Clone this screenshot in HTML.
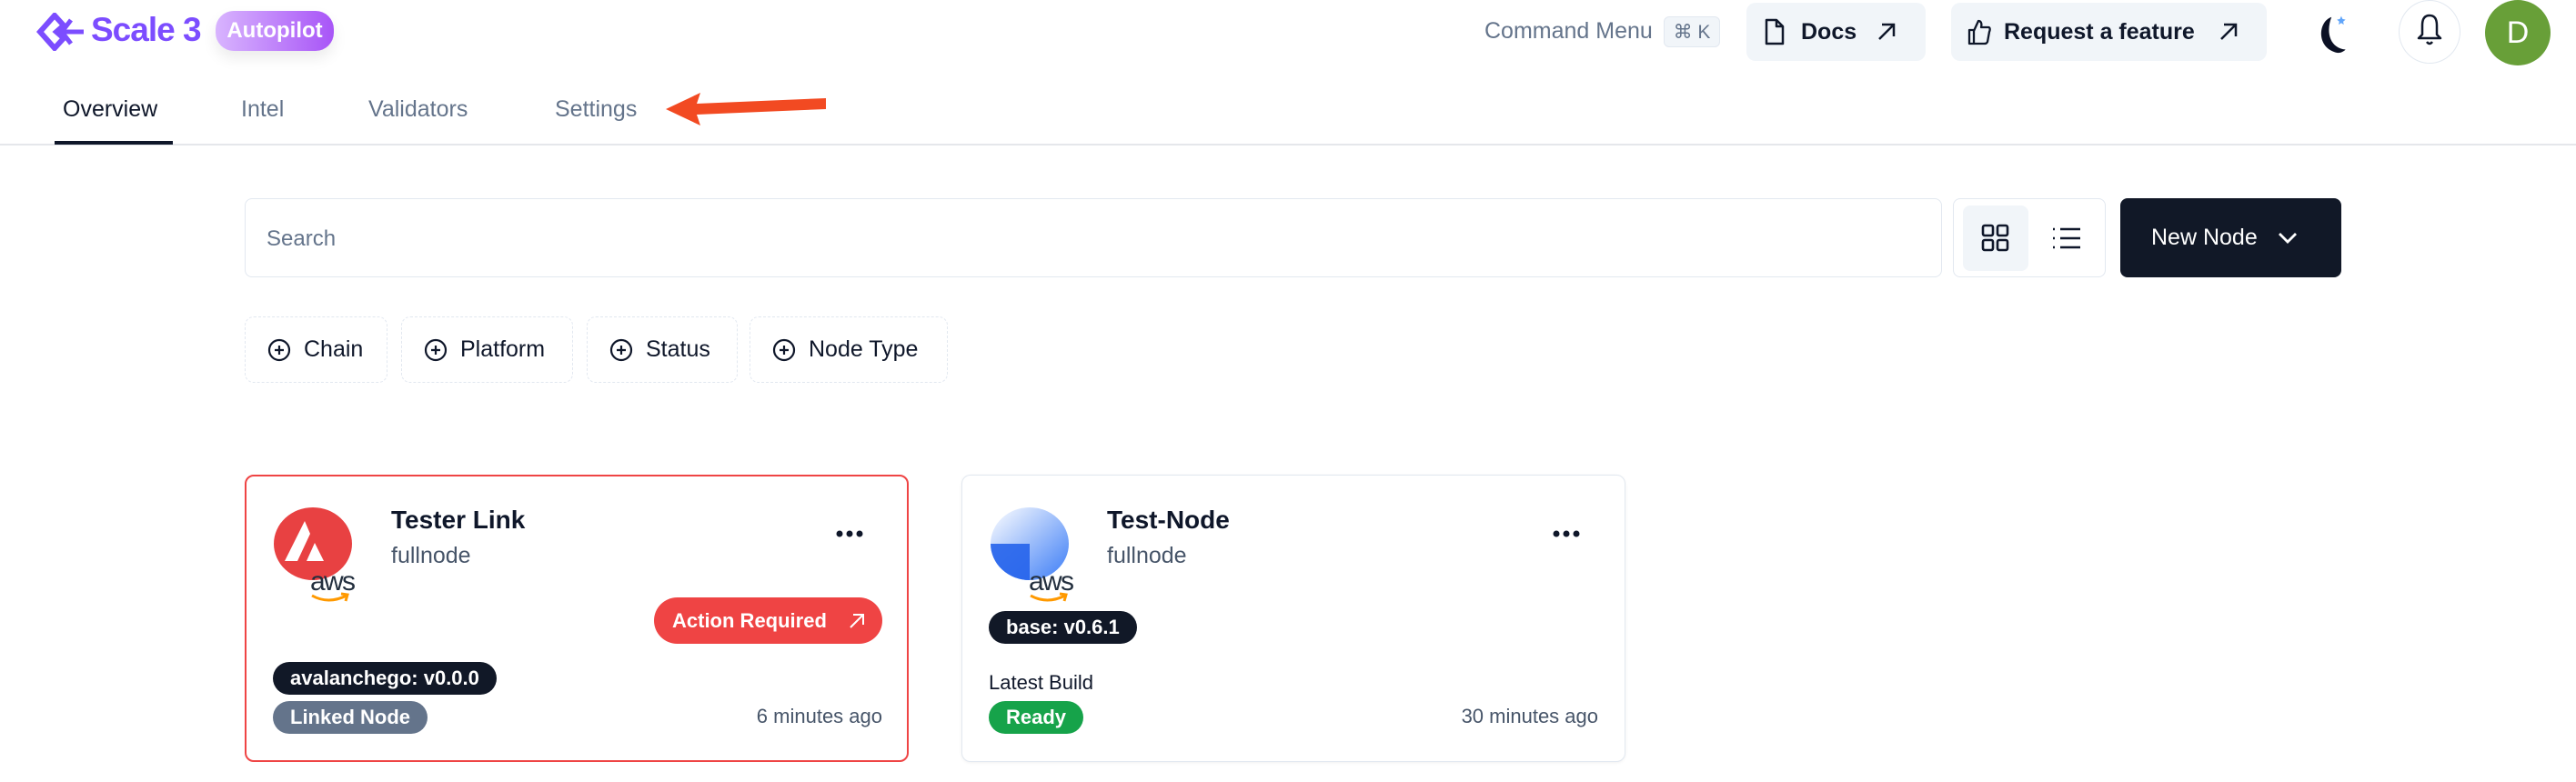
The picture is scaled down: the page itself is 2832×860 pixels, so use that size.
<!DOCTYPE html>
<html><head><meta charset="utf-8"><style>
*{box-sizing:border-box;margin:0;padding:0}
body{width:2832px;height:860px;background:#fff;font-family:"Liberation Sans",Arial,sans-serif;position:relative;overflow:hidden;color:#0f172a}
.a{position:absolute}
.btn{position:absolute;background:#f1f5f9;border-radius:10px;display:flex;align-items:center;font-size:25px;color:#0f172a}
.tab{position:absolute;top:106px;font-size:25px;color:#64748b}
.filt{position:absolute;top:348px;height:73px;border:1.5px dashed #e2e8f0;border-radius:10px;display:flex;align-items:center;font-size:25px;color:#0f172a;padding-left:24px}
.filt svg{margin-right:14px}
.card{position:absolute;top:522px;width:730px;height:316px;border-radius:10px;background:#fff}
.badge{position:absolute;height:36px;border-radius:18px;color:#fff;font-size:22px;font-weight:bold;display:flex;align-items:center;padding:0 19px}
.dots{position:absolute;top:583px}
</style></head><body>
<svg class="a" style="left:40px;top:14px" width="56" height="42" viewBox="0 0 56 42">
<path d="M20 3 L4 21 L20 39 L30 28 L22 21 L30 14 Z" fill="none" stroke="#7c4dff" stroke-width="6" stroke-linejoin="miter"/>
<path d="M26 21 H52 M38 8 L28 21 L38 34" fill="none" stroke="#7c4dff" stroke-width="5"/>
</svg>
<div class="a" style="left:100px;top:12px;font-size:37px;font-weight:bold;color:#7c4dff;letter-spacing:-1px">Scale 3</div>
<div class="a" style="left:237px;top:12px;width:130px;height:44px;border-radius:20px;background:linear-gradient(90deg,#d8b4fe,#a855f7);color:#fff;font-size:24px;font-weight:bold;display:flex;align-items:center;justify-content:center;box-shadow:0 8px 16px rgba(0,0,0,0.08)">Autopilot</div>
<div class="a" style="left:1632px;top:20px;font-size:25px;color:#64748b">Command Menu</div>
<div class="a" style="left:1829px;top:18px;width:62px;height:34px;border:1px solid #e2e8f0;background:#f1f5f9;border-radius:6px;font-size:21px;color:#64748b;display:flex;align-items:center;justify-content:center">⌘ K</div>
<div class="btn" style="left:1920px;top:3px;width:197px;height:64px;padding-left:20px">
<svg width="22" height="30" viewBox="0 0 22 30"><path d="M2 2 H13 L20 9 V28 H2 Z M13 2 V9 H20" fill="none" stroke="#0f172a" stroke-width="2.5" stroke-linejoin="round"/></svg>
<span style="margin-left:18px;font-weight:bold">Docs</span>
<svg style="margin-left:22px" width="22" height="22" viewBox="0 0 22 22"><path d="M3 19 L19 3 M6 3 H19 V16" fill="none" stroke="#0f172a" stroke-width="2.5"/></svg></div>
<div class="btn" style="left:2145px;top:3px;width:347px;height:64px;padding-left:18px">
<svg width="26" height="30" viewBox="0 0 26 30"><path d="M2 13 H7 V28 H2 Z M7 14 L12 3 C15 3 16 6 15 10 H23 C25 10 25 13 24 15 L22 26 C21 28 20 28 18 28 H7" fill="none" stroke="#0f172a" stroke-width="2.3" stroke-linejoin="round"/></svg>
<span style="margin-left:14px;font-weight:bold">Request a feature</span>
<svg style="margin-left:26px" width="22" height="22" viewBox="0 0 22 22"><path d="M3 19 L19 3 M6 3 H19 V16" fill="none" stroke="#0f172a" stroke-width="2.5"/></svg></div>
<svg class="a" style="left:2540px;top:14px" width="44" height="50" viewBox="0 0 34 42"><path d="M18 4 C6 8 4 30 20 36 C24 38 28 37 31 34 C18 33 12 20 18 4 Z" fill="#0b1024"/><path d="M27 3 l1.2 2.8 2.8 0.6 -2.2 1.8 0.6 2.8 -2.4 -1.6 -2.4 1.6 0.6 -2.8 -2.2 -1.8 2.8 -0.6Z" fill="#60a5fa"/></svg>
<div class="a" style="left:2637px;top:0;width:68px;height:70px;border-radius:50%;border:1px solid #e2e8f0"></div>
<svg class="a" style="left:2656px;top:14px" width="30" height="38" viewBox="0 0 30 38"><path d="M15 3 C8 3 7 9 7 14 V24 L3 28 H27 L23 24 V14 C23 9 22 3 15 3 Z" fill="none" stroke="#0f172a" stroke-width="2.5" stroke-linejoin="round"/><path d="M12 32 Q15 36 18 32" fill="none" stroke="#0f172a" stroke-width="2.5"/></svg>
<div class="a" style="left:2732px;top:0;width:72px;height:72px;border-radius:50%;background:#689f38;color:#fff;font-size:34px;display:flex;align-items:center;justify-content:center">D</div>
<div class="tab" style="left:69px;color:#0f172a">Overview</div>
<div class="tab" style="left:265px">Intel</div>
<div class="tab" style="left:405px">Validators</div>
<div class="tab" style="left:610px">Settings</div>
<div class="a" style="left:0;top:158px;width:2832px;height:2px;background:#e5e7eb"></div>
<div class="a" style="left:60px;top:155px;width:130px;height:4px;background:#0f172a"></div>
<svg class="a" style="left:728px;top:98px" width="184" height="42" viewBox="0 0 184 42"><path d="M4 22 L42 4 L38 16 L180 10 L180 22 L38 28 L42 40 Z" fill="#f24a22"/></svg>
<div class="a" style="left:269px;top:218px;width:1866px;height:87px;border:1.5px solid #e2e8f0;border-radius:8px;font-size:24px;color:#64748b;padding:30px 0 0 23px">Search</div>
<div class="a" style="left:2147px;top:218px;width:168px;height:87px;border:1.5px solid #e2e8f0;border-radius:8px"></div>
<div class="a" style="left:2158px;top:226px;width:72px;height:72px;background:#f1f5f9;border-radius:8px"></div>
<svg class="a" style="left:2178px;top:246px" width="31" height="31" viewBox="0 0 31 31"><g fill="none" stroke="#0f172a" stroke-width="2.6"><rect x="2" y="2" width="11" height="11" rx="2"/><rect x="18" y="2" width="11" height="11" rx="2"/><rect x="2" y="18" width="11" height="11" rx="2"/><rect x="18" y="18" width="11" height="11" rx="2"/></g></svg>
<svg class="a" style="left:2256px;top:249px" width="32" height="26" viewBox="0 0 32 26"><g stroke="#0f172a" stroke-width="2.6"><path d="M9 3 H31 M9 13 H31 M9 23 H31"/><path d="M1 3 H3 M1 13 H3 M1 23 H3"/></g></svg>
<div class="a" style="left:2331px;top:218px;width:243px;height:87px;background:#111827;border-radius:8px;color:#fff;font-size:25px;display:flex;align-items:center;padding-left:34px">New Node
<svg style="margin-left:22px" width="22" height="14" viewBox="0 0 22 14"><path d="M2 2 L11 11 L20 2" fill="none" stroke="#fff" stroke-width="2.8"/></svg></div>
<div class="filt" style="left:269px;width:157px"><svg width="26" height="26" viewBox="0 0 26 26"><circle cx="13" cy="13" r="11" fill="none" stroke="#0f172a" stroke-width="2.2"/><path d="M13 8 V18 M8 13 H18" stroke="#0f172a" stroke-width="2.2"/></svg>Chain</div>
<div class="filt" style="left:441px;width:189px"><svg width="26" height="26" viewBox="0 0 26 26"><circle cx="13" cy="13" r="11" fill="none" stroke="#0f172a" stroke-width="2.2"/><path d="M13 8 V18 M8 13 H18" stroke="#0f172a" stroke-width="2.2"/></svg>Platform</div>
<div class="filt" style="left:645px;width:166px"><svg width="26" height="26" viewBox="0 0 26 26"><circle cx="13" cy="13" r="11" fill="none" stroke="#0f172a" stroke-width="2.2"/><path d="M13 8 V18 M8 13 H18" stroke="#0f172a" stroke-width="2.2"/></svg>Status</div>
<div class="filt" style="left:824px;width:218px"><svg width="26" height="26" viewBox="0 0 26 26"><circle cx="13" cy="13" r="11" fill="none" stroke="#0f172a" stroke-width="2.2"/><path d="M13 8 V18 M8 13 H18" stroke="#0f172a" stroke-width="2.2"/></svg>Node Type</div>
<div class="card" style="left:269px;border:2px solid #ef4444"></div>
<svg class="a" style="left:299px;top:551px" width="100" height="120" viewBox="0 0 100 120">
<ellipse cx="45" cy="47" rx="43" ry="40" fill="#e84142"/>
<path d="M36 22 L14 66 H28 L42 36 Z M47 46 L38 66 H57 Z" fill="#fff"/>
<text x="42" y="98" font-family="Liberation Sans,sans-serif" font-size="30" fill="#232f3e" textLength="50">aws</text>
<path d="M44 104 Q62 114 82 104 M76 102 L83 103 L81 110" fill="none" stroke="#ff9900" stroke-width="3"/></svg>
<div class="a" style="left:430px;top:556px;font-size:28px;font-weight:bold">Tester Link</div>
<div class="a" style="left:430px;top:597px;font-size:25px;color:#475569">fullnode</div>
<svg class="dots" style="left:919px" width="30" height="8" viewBox="0 0 30 8"><circle cx="4" cy="4" r="3.5" fill="#0f172a"/><circle cx="15" cy="4" r="3.5" fill="#0f172a"/><circle cx="26" cy="4" r="3.5" fill="#0f172a"/></svg>
<div class="a" style="left:719px;top:657px;width:251px;height:51px;border-radius:26px;background:#ef4444;color:#fff;font-size:22px;font-weight:bold;display:flex;align-items:center;padding-left:20px">Action Required
<svg style="margin-left:24px" width="18" height="18" viewBox="0 0 18 18"><path d="M2 16 L16 2 M5 2 H16 V13" fill="none" stroke="#fff" stroke-width="2"/></svg></div>
<div class="badge" style="left:300px;top:728px;background:#111827">avalanchego: v0.0.0</div>
<div class="badge" style="left:300px;top:771px;background:#64748b">Linked Node</div>
<div class="a" style="right:1862px;top:775px;font-size:22px;color:#475569">6 minutes ago</div>
<div class="card" style="left:1057px;border:1.5px solid #e2e8f0;box-shadow:0 1px 3px rgba(0,0,0,0.06)"></div>
<svg class="a" style="left:1087px;top:551px" width="100" height="120" viewBox="0 0 100 120">
<defs><linearGradient id="g" x1="0" y1="0" x2="1" y2="1"><stop offset="0" stop-color="#fff"/><stop offset="1" stop-color="#3b7cf6"/></linearGradient></defs>
<ellipse cx="45" cy="47" rx="43" ry="40" fill="url(#g)"/>
<path d="M2 47 H45 V87 A43 40 0 0 1 2 47 Z" fill="#2563eb" opacity="0.9"/>
<text x="44" y="98" font-family="Liberation Sans,sans-serif" font-size="30" fill="#232f3e" textLength="50">aws</text>
<path d="M46 104 Q64 114 84 104 M78 102 L85 103 L83 110" fill="none" stroke="#ff9900" stroke-width="3"/></svg>
<div class="a" style="left:1217px;top:556px;font-size:28px;font-weight:bold">Test-Node</div>
<div class="a" style="left:1217px;top:597px;font-size:25px;color:#475569">fullnode</div>
<svg class="dots" style="left:1707px" width="30" height="8" viewBox="0 0 30 8"><circle cx="4" cy="4" r="3.5" fill="#0f172a"/><circle cx="15" cy="4" r="3.5" fill="#0f172a"/><circle cx="26" cy="4" r="3.5" fill="#0f172a"/></svg>
<div class="badge" style="left:1087px;top:672px;background:#111827">base: v0.6.1</div>
<div class="a" style="left:1087px;top:738px;font-size:22px;color:#0f172a">Latest Build</div>
<div class="badge" style="left:1087px;top:771px;background:#16a34a">Ready</div>
<div class="a" style="right:1075px;top:775px;font-size:22px;color:#475569">30 minutes ago</div>
</body></html>
